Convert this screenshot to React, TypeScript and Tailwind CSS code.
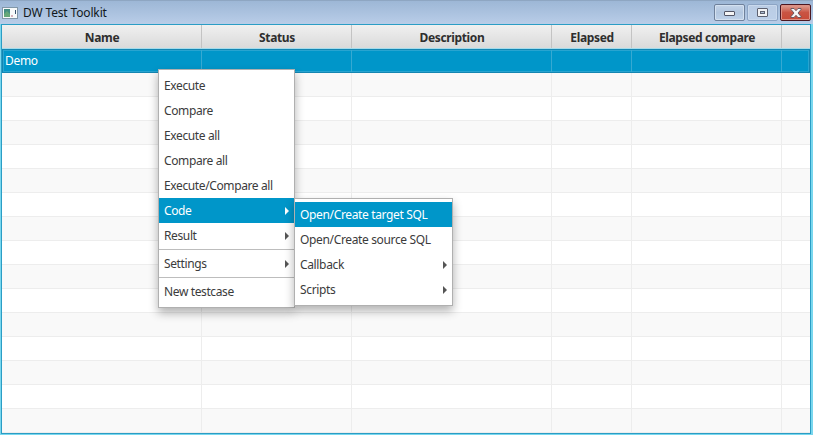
import React from 'react';

const columns = [
  { title: 'Name', width: 'w-[200px]' },
  { title: 'Status', width: 'w-[150px]' },
  { title: 'Description', width: 'w-[200px]' },
  { title: 'Elapsed', width: 'w-[80px]' },
  { title: 'Elapsed compare', width: 'w-[150px]' },
  { title: '', width: 'flex-1' },
];

type Entry = { label: string; arrow?: boolean; active?: boolean; separated?: boolean };

const mainMenu: Entry[] = [
  { label: 'Execute' },
  { label: 'Compare' },
  { label: 'Execute all' },
  { label: 'Compare all' },
  { label: 'Execute/Compare all' },
  { label: 'Code', arrow: true, active: true },
  { label: 'Result', arrow: true },
  { label: 'Settings', arrow: true, separated: true },
  { label: 'New testcase', separated: true },
];

const codeMenu: Entry[] = [
  { label: 'Open/Create target SQL', active: true },
  { label: 'Open/Create source SQL' },
  { label: 'Callback', arrow: true },
  { label: 'Scripts', arrow: true },
];

function MenuItems({ items }: { items: Entry[] }) {
  return (
    <>
      {items.map((item) => (
        <React.Fragment key={item.label}>
          {item.separated && (
            <div className="flex h-[3px] items-center">
              <div className="h-px w-full bg-[#bdbdbd]" />
            </div>
          )}
          <div
            className={`flex h-[25px] items-center justify-between pr-[5px] pl-[5px] ${
              item.active ? 'bg-[#0096c9] text-white' : 'text-[#3b3b3b]'
            }`}
          >
            <span className="whitespace-nowrap">{item.label}</span>
            {item.arrow && (
              <svg width="4" height="8" viewBox="0 0 4 8" fill={item.active ? '#ffffff' : '#555555'}>
                <path d="M0 0L4 4L0 8Z" />
              </svg>
            )}
          </div>
        </React.Fragment>
      ))}
    </>
  );
}

function TitleBar() {
  return (
    <div className="flex h-6 shrink-0 items-start justify-between border-t border-[#8ea6c2] bg-linear-to-b from-[#9db7d6] to-[#b9cde8] pr-[2px] pl-[2px]">
      <div className="flex items-center pt-[3px]">
        <svg width="16" height="14" viewBox="0 0 16 14">
          <rect x="0.5" y="1.5" width="15" height="11" fill="#f8fafa" stroke="#8297a8" />
          <rect x="2" y="3" width="6" height="8" fill="#438d82" />
          <path d="M2 8L5 5L8 8V11H2Z" fill="#65a779" />
          <rect x="9" y="9" width="2" height="2" fill="#d5b0ba" />
          <rect x="13" y="4" width="1" height="4" fill="#38516c" />
        </svg>
        <span className="ml-[5px] text-[12px] leading-[17px] tracking-[-0.15px] text-[#111820]">DW Test Toolkit</span>
      </div>
      <div className="flex gap-[2px] pt-[3px]">
        <div className="flex h-[17px] w-[31px] items-center justify-center rounded-[2px] border border-[#6f819b] bg-linear-to-b from-[#c5d5e9] via-[#b2c6df] to-[#bfd2ea] shadow-[inset_0_0_0_1px_#d4e1f0]">
          <svg className="mt-[2px]" width="11" height="5" viewBox="0 0 11 5">
            <rect x="0.5" y="0.5" width="10" height="4" rx="0.5" fill="#f5f5f5" stroke="#535666" />
          </svg>
        </div>
        <div className="flex h-[17px] w-[31px] items-center justify-center rounded-[2px] border border-[#8ca4c4] bg-linear-to-b from-[#bacce4] to-[#bdd0e9] shadow-[inset_0_0_0_1px_#c9d9ed]">
          <svg width="11" height="9" viewBox="0 0 11 9">
            <rect x="0.5" y="0.5" width="10" height="8" rx="0.5" fill="#f2f3f5" stroke="#5d6170" />
            <rect x="3.5" y="3.5" width="4" height="2" fill="#aebfd4" stroke="#5d6170" />
          </svg>
        </div>
        <div className="flex h-[17px] w-[31px] items-center justify-center rounded-[2px] border border-[#4b1721] bg-linear-to-b from-[#dea196] via-[#c95443] to-[#c84b37] shadow-[inset_0_0_0_1px_#dc9185]">
          <svg width="12" height="10" viewBox="0 0 12 10">
            <path
              d="M1 0.5H4L6 2.7L8 0.5H11V1.5L8 5L11 8.5V9.5H8L6 7.3L4 9.5H1V8.5L4 5L1 1.5Z"
              fill="#f7f7f7"
              stroke="#62535d"
              strokeWidth="0.9"
            />
          </svg>
        </div>
      </div>
    </div>
  );
}

function Table() {
  return (
    <div className="mr-[2px] ml-px flex h-[410px] flex-col overflow-hidden border border-[#2b9dc5] bg-white">
      <div className="flex h-6 shrink-0 border-b border-[#a5dcec] bg-linear-to-b from-[#f0f0f0] to-[#dadada]">
        {columns.map((column, i) => (
          <div
            key={i}
            className={`flex items-center justify-center pt-[3px] pl-px text-[12px] font-bold tracking-[-0.35px] text-[#2e2e2e] ${column.width} ${
              i < 5 ? 'border-r border-[#c3c3c3]' : ''
            }`}
          >
            {column.title}
          </div>
        ))}
      </div>
      {Array.from({ length: 16 }, (_, row) => (
        <div
          key={row}
          className={`flex h-6 shrink-0 ${
            row === 0
              ? 'border border-[#1486b2] bg-[#0096c9] text-white shadow-[inset_0_0_0_1px_#28a4d0]'
              : row % 2
                ? 'border-b border-[#ededed] bg-[#f9f9f9]'
                : 'border-b border-[#ededed] bg-white'
          }`}
        >
          {columns.map((column, i) => (
            <div
              key={i}
              className={`flex items-center ${row === 0 && i === 0 ? 'w-[199px]' : column.width} ${
                i < 5 ? (row === 0 ? 'border-r border-[#36a9d2]' : 'border-r border-[#ededed]') : ''
              }`}
            >
              {row === 0 && i === 0 && <span className="pl-[2px] tracking-[-0.3px]">Demo</span>}
            </div>
          ))}
        </div>
      ))}
    </div>
  );
}

export default function App() {
  return (
    <div className="relative h-[435px] w-[813px] overflow-hidden bg-[#79d7ee] font-['Noto_Sans','Open_Sans',sans-serif] text-[12px] leading-4">
      <TitleBar />
      <Table />
      <div className="absolute top-[69px] left-[158px] h-[239px] w-[137px] border border-[#b0b0b0] bg-white py-[3px] tracking-[-0.38px] shadow-[0_5px_9px_rgba(0,0,0,0.3)]">
        <MenuItems items={mainMenu} />
      </div>
      <div className="absolute top-[198px] left-[294px] h-[108px] w-[159px] border border-[#b0b0b0] bg-white py-[3px] tracking-[-0.35px] shadow-[0_5px_9px_rgba(0,0,0,0.3)]">
        <MenuItems items={codeMenu} />
      </div>
    </div>
  );
}
